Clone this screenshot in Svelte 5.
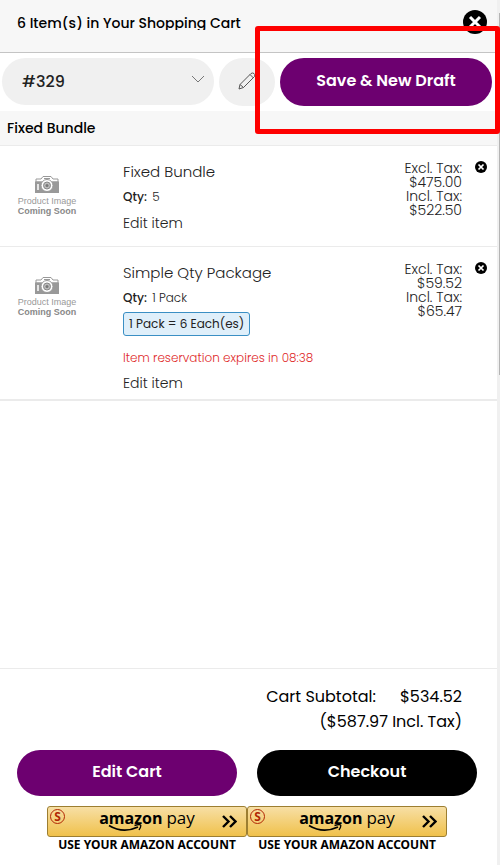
<script>
  const items = [
    { name: 'Fixed Bundle', qty: '5', excl: '$475.00', incl: '$522.50' },
    {
      name: 'Simple Qty Package',
      qty: '1 Pack',
      pack: '1 Pack = 6 Each(es)',
      expires: '08:38',
      excl: '$59.52',
      incl: '$65.47'
    }
  ];
  const payButtons = [1, 2];
  let draft = $state('329');
</script>

<div class="drawer">
  <div class="panel">
    <header class="top">
      <h1>6 Item(s) in Your Shopping Cart</h1>
      <button class="close" aria-label="Close cart">
        <svg viewBox="0 0 24 24" width="24" height="24">
          <circle cx="12" cy="12" r="12" />
          <path d="M7 7l10 10M17 7L7 17" stroke="#fff" stroke-width="3" />
        </svg>
      </button>
    </header>

    <div class="drafts">
      <div class="picker">
        <select bind:value={draft} aria-label="Draft">
          <option value="329">#329</option>
        </select>
        <svg class="chevron" viewBox="0 0 14 8" width="14" height="8">
          <path d="M1 1l6 6 6-6" fill="none" stroke="#777" />
        </svg>
      </div>
      <button class="rename" aria-label="Rename draft">
        <svg viewBox="0 0 18 18" width="18" height="18">
          <path d="M1 17l1-4.500L13 1.500q1.500-1 3 0t.500 3L5.500 15.500zM12 2.500L15.500 6M2 12.500L5.500 15.500" fill="none" stroke="#555" />
        </svg>
      </button>
      <div class="save">
        <button class="pill">Save &amp; New Draft</button>
        <div class="highlight"></div>
      </div>
    </div>

    <h2>Fixed Bundle</h2>

    <ul class="items">
      {#each items as item}
        <li>
          <div class="thumb">
            <svg viewBox="0 0 24 18" width="24" height="18">
              <path d="M1 3h5l2-2.500h8L18 3h5v3H1z" fill="#fff" stroke="#999" />
              <path d="M0 5.500h24V17H0z" fill="#999" />
              <path d="M3 8v6" stroke="#fff" stroke-width="1.500" />
              <circle cx="12" cy="9.500" r="6" fill="#fff" stroke="#999" />
              <circle cx="12" cy="9.500" r="3.500" fill="#bbb" stroke="#888" />
              <circle cx="12" cy="9.500" r="1.500" fill="#777" />
              <path d="M9 2.500h6" stroke="#999" />
            </svg>
            <span>Product Image</span>
            <b>Coming Soon</b>
          </div>
          <div class="details">
            <h3>{item.name}</h3>
            <p class="qty"><b>Qty:</b> {item.qty}</p>
            {#if item.pack}
              <p class="pack">{item.pack}</p>
            {/if}
            {#if item.expires}
              <p class="expires">Item reservation expires in {item.expires}</p>
            {/if}
            <a href="#edit">Edit item</a>
          </div>
          <div class="price">Excl. Tax:<br />{item.excl}<br />Incl. Tax:<br />{item.incl}</div>
          <button class="remove" aria-label="Remove {item.name}">
            <svg viewBox="0 0 24 24" width="12" height="12">
              <circle cx="12" cy="12" r="12" />
              <path d="M7 7l10 10M17 7L7 17" stroke="#fff" stroke-width="3.500" />
            </svg>
          </button>
        </li>
      {/each}
    </ul>

    <footer>
      <div class="totals">
        <p><span>Cart Subtotal:</span><span>$534.52</span></p>
        <p>($587.97 Incl. Tax)</p>
      </div>
      <div class="actions">
        <button class="pill">Edit Cart</button>
        <button class="pill dark">Checkout</button>
      </div>
      <div class="pays">
        {#each payButtons as n (n)}
          <div class="pay">
            <button aria-label="Amazon Pay">
              <span class="sandbox">S</span>
              <span class="brand">
                <b>amazon</b><span>pay</span>
                <svg class="smile" viewBox="0 0 34 8" width="34" height="8">
                  <path d="M1 1.500Q15 10 30 3" fill="none" stroke="#000" stroke-width="1.800" />
                  <path d="M26.500 1.500q5-1.500 6-.5t-1.500 5" fill="none" stroke="#000" stroke-width="1.400" />
                </svg>
              </span>
              <svg class="go" viewBox="0 0 15 13" width="15" height="13">
                <path d="M1 1l5.500 5.500L1 12M8 1l5.500 5.500L8 12" fill="none" stroke="#000" stroke-width="2.400" />
              </svg>
            </button>
            <p>USE YOUR AMAZON ACCOUNT</p>
          </div>
        {/each}
      </div>
    </footer>
  </div>
  <div class="track"><div class="bar"></div></div>
</div>

<style>
  :global(body) {
    margin: 0;
    background: #fff;
  }
  .drawer {
    display: flex;
    min-height: 100vh;
    overflow: hidden;
    font-family: Poppins, Inter, sans-serif;
    color: #222;
  }
  .panel {
    flex: 1;
    display: flex;
    flex-direction: column;
    min-width: 0;
  }
  .track {
    width: 3px;
    background: #f0f0f0;
    padding-top: 13px;
    box-sizing: border-box;
  }
  .bar {
    width: 1px;
    height: 362px;
    margin-left: 2px;
    background: #b4b4b4;
  }
  h1, h2, h3, p, ul {
    margin: 0;
    padding: 0;
    font-weight: 400;
  }
  button {
    font-family: inherit;
    border: 0;
    padding: 0;
    background: none;
    cursor: pointer;
  }
  svg {
    display: block;
  }
  .top {
    display: flex;
    justify-content: space-between;
    align-items: flex-start;
    box-sizing: border-box;
    height: 53px;
    padding: 10px 10px 0 17px;
    background: #f7f7f7;
    border-bottom: 1px solid #c4c4c4;
  }
  h1 {
    height: 14px;
    margin-top: 6px;
    overflow: hidden;
    font-size: 14px;
    line-height: 14px;
    font-weight: 500;
    color: #000;
  }
  .drafts {
    display: flex;
    gap: 5px;
    padding: 5px 5px 5px 2px;
  }
  .picker {
    position: relative;
    flex: 1;
  }
  select {
    appearance: none;
    width: 100%;
    height: 47px;
    padding: 0 20px;
    border: 0;
    border-radius: 24px;
    background: #f0f0f0;
    font: 500 16px Poppins, Inter, sans-serif;
    color: #222;
  }
  .chevron {
    position: absolute;
    right: 9px;
    top: 17px;
  }
  .rename {
    display: flex;
    align-items: center;
    justify-content: center;
    width: 56px;
    height: 48px;
    padding-bottom: 2px;
    border-radius: 24px;
    background: #f0f0f0;
  }
  .save {
    position: relative;
    flex: 1;
  }
  .pill {
    width: 100%;
    height: 48px;
    padding-bottom: 3px;
    border-radius: 24px;
    background: #6d0070;
    color: #fff;
    font-size: 16px;
    font-weight: 600;
  }
  .dark {
    background: #000;
  }
  .highlight {
    position: absolute;
    inset: -32px -8px -28px -25px;
    border: 5px solid #fe0000;
    border-radius: 3px;
    pointer-events: none;
  }
  h2 {
    padding: 7px;
    background: #f7f7f7;
    border-bottom: 1px solid #ebebeb;
    font-size: 14px;
    line-height: 20px;
    font-weight: 500;
    color: #000;
  }
  .items {
    list-style: none;
    border-bottom: 2px solid #ebebeb;
  }
  li {
    display: flex;
    align-items: flex-start;
    box-sizing: border-box;
    min-height: 100px;
    padding: 14px 10px 5px 7px;
  }
  li + li {
    border-top: 1px solid #ebebeb;
  }
  .thumb {
    display: flex;
    flex-direction: column;
    align-items: center;
    width: 80px;
    padding-top: 16px;
    margin-right: 36px;
    font: 9px/10px "Liberation Sans", Arial, sans-serif;
    color: #999;
  }
  .thumb span {
    margin-top: 2px;
  }
  .thumb b {
    color: #888;
  }
  .details {
    flex: 1;
    font-size: 12px;
    line-height: 18px;
  }
  h3 {
    margin-bottom: 4px;
    font-size: 15px;
    line-height: 24px;
    font-weight: 300;
  }
  .qty, .expires {
    font-weight: 300;
  }
  .qty b {
    margin-right: 2px;
    font-weight: 500;
  }
  .pack {
    width: fit-content;
    margin-top: 5px;
    padding: 2px 5px;
    border: 1px solid #3a8fc4;
    border-radius: 3px;
    background: #dfeffa;
  }
  .expires {
    margin-top: 13px;
    line-height: 17px;
    color: #e02b2b;
  }
  a {
    display: block;
    margin-top: 7px;
    color: #222;
    font-size: 14px;
    line-height: 21px;
    font-weight: 300;
    text-decoration: none;
  }
  .price {
    padding-top: 1px;
    font-size: 14px;
    line-height: 14px;
    font-weight: 300;
    text-align: right;
  }
  .remove {
    margin: 1px 0 0 13px;
  }
  footer {
    margin-top: auto;
    border-top: 1px solid #ebebeb;
    padding: 15px 20px 13px 17px;
  }
  .totals {
    padding-right: 15px;
    font-size: 16px;
    line-height: 25px;
    text-align: right;
    color: #000;
  }
  .totals span + span {
    margin-left: 24px;
  }
  .actions {
    display: flex;
    gap: 20px;
    margin: 16px 0 10px;
  }
  .actions .pill {
    height: 46px;
  }
  .pays {
    display: flex;
    justify-content: center;
  }
  .pay {
    width: 200px;
  }
  .pay button {
    position: relative;
    display: flex;
    align-items: center;
    justify-content: center;
    box-sizing: border-box;
    width: 100%;
    height: 31px;
    border: 1px solid #9c7e31;
    border-radius: 3px;
    background: linear-gradient(#f7dfa5, #f0c14b);
    color: #000;
  }
  .pay p {
    font: 700 12px/15px "Noto Sans", sans-serif;
    text-align: center;
    color: #000;
    white-space: nowrap;
  }
  .sandbox {
    position: absolute;
    left: 2px;
    top: 2px;
    width: 13px;
    height: 13px;
    border: 1px solid #b12704;
    border-radius: 50%;
    color: #b12704;
    font: 700 12px/13px "Noto Sans", sans-serif;
  }
  .brand {
    position: relative;
    display: flex;
    gap: 4px;
    padding-bottom: 8px;
    font: 17px/18px "Open Sans", sans-serif;
  }
  .brand b {
    font-size: 16px;
  }
  .smile {
    position: absolute;
    left: 9px;
    top: 15px;
  }
  .go {
    position: absolute;
    right: 9px;
    top: 8px;
  }
</style>
